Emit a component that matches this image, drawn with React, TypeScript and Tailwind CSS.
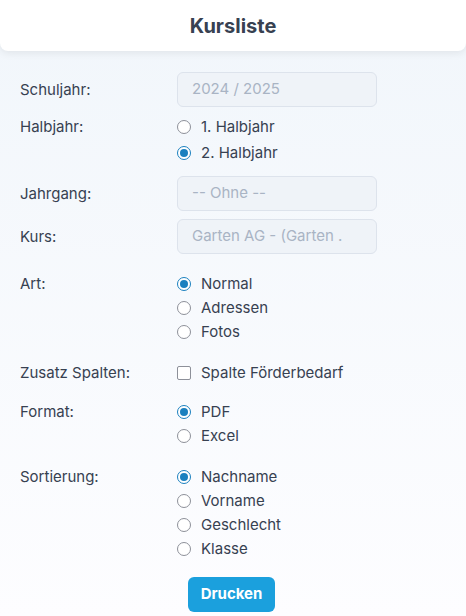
import React from "react";

const font = { fontFamily: "Inter, 'Noto Sans', sans-serif" };

function Radio({ label, checked }: { label: string; checked?: boolean }) {
  return (
    <div className="flex h-6 items-center">
      {checked ? (
        <span className="flex h-[14px] w-[14px] items-center justify-center rounded-full border border-[#1a80bf] bg-white">
          <span className="h-[8px] w-[8px] rounded-full bg-[#1a80bf]" />
        </span>
      ) : (
        <span className="h-[14px] w-[14px] rounded-full border border-[#8d9099] bg-white" />
      )}
      <span className="ml-[10px] text-[15px] text-[#374151]">{label}</span>
    </div>
  );
}

function Field({ value }: { value: string }) {
  return (
    <div className="flex h-[35px] w-[200px] items-center overflow-hidden whitespace-nowrap rounded-md border border-[#dde3ec] bg-[#eff3f8] pl-[14px] text-[15px] text-[#a9b4c4]">
      {value}
    </div>
  );
}

function Row({ label, field, className, children }: { label: string; field?: boolean; className?: string; children: React.ReactNode }) {
  return (
    <div className={`flex ${className ?? ""}`}>
      <div className={`w-[157px] shrink-0 text-[15px] leading-6 text-[#374151] ${field ? "pt-[6px]" : ""}`}>{label}</div>
      <div className="flex flex-col">{children}</div>
    </div>
  );
}

export default function App() {
  return (
    <div className="min-h-[616px] bg-gradient-to-b from-[#f1f6fb] to-[#fdfdff]" style={font}>
      <header className="flex h-[51px] items-center justify-center rounded-b-lg bg-white shadow-[0_2px_8px_rgba(0,0,0,0.08)]">
        <h1 className="text-[20px] font-bold text-[#374151]">Kursliste</h1>
      </header>
      <div className="px-5 pt-[21px] pb-[5px]">
        <Row label="Schuljahr:" field>
          <Field value="2024 / 2025" />
        </Row>
        <Row label="Halbjahr:" className="mt-2">
          <Radio label="1. Halbjahr" />
          <div className="mt-[2px]">
            <Radio label="2. Halbjahr" checked />
          </div>
        </Row>
        <Row label="Jahrgang:" field className="mt-[11px]">
          <Field value="-- Ohne --" />
        </Row>
        <Row label="Kurs:" field className="mt-2">
          <Field value="Garten AG - (Garten ." />
        </Row>
        <Row label="Art:" className="mt-[18px]">
          <Radio label="Normal" checked />
          <Radio label="Adressen" />
          <Radio label="Fotos" />
        </Row>
        <Row label="Zusatz Spalten:" className="mt-[17px]">
          <div className="flex h-6 items-center">
            <span className="h-[14px] w-[14px] rounded-[2px] border border-[#8d9099] bg-white" />
            <span className="ml-[10px] text-[15px] text-[#374151]">Spalte Förderbedarf</span>
          </div>
        </Row>
        <Row label="Format:" className="mt-[15px]">
          <Radio label="PDF" checked />
          <Radio label="Excel" />
        </Row>
        <Row label="Sortierung:" className="mt-[17px]">
          <Radio label="Nachname" checked />
          <Radio label="Vorname" />
          <Radio label="Geschlecht" />
          <Radio label="Klasse" />
        </Row>
        <div className="mt-4 flex justify-center pr-[3px]">
          <button className="h-[35px] w-[87px] rounded-md bg-[#1ba0dd] text-[15px] font-bold text-white">Drucken</button>
        </div>
      </div>
    </div>
  );
}
